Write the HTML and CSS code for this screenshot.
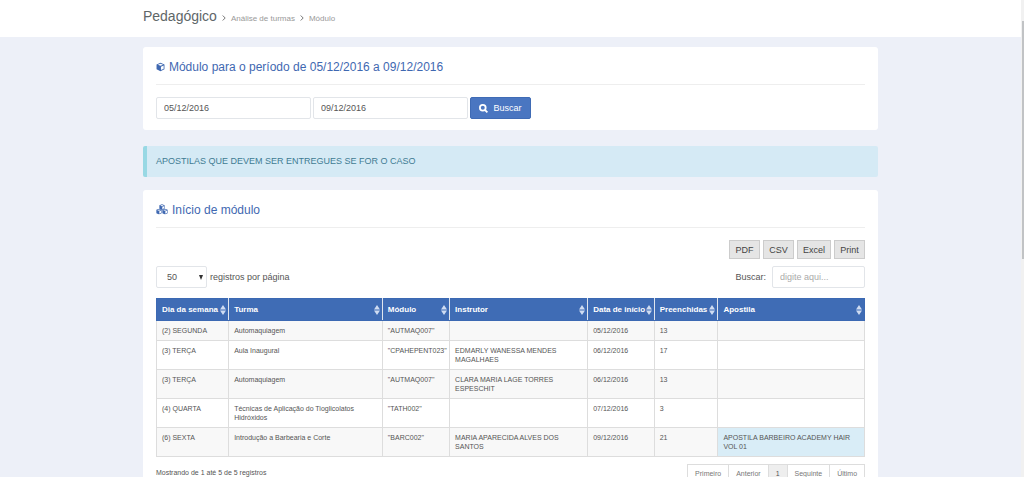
FILE: index.html
```html
<!DOCTYPE html>
<html lang="pt-BR">
<head>
<meta charset="utf-8">
<title>Pedagógico - Módulo</title>
<link rel="stylesheet" href="styles.css">
</head>
<body>
<svg class="defs" aria-hidden="true">
  <symbol id="cube" viewBox="0 0 20 20">
    <path fill="currentColor" fill-rule="evenodd" d="M10 0.8 18.8 4.2V15.2L10 19.6 1.2 15.2V4.2ZM10 2.8 4 5.1 10 7.4 16 5.1ZM11 9.2V16.9L17 13.9V6.9Z"/>
  </symbol>
  <symbol id="sort" viewBox="0 0 6 10">
    <path fill="currentColor" d="M3 0 6 4.4H0ZM0 5.6H6L3 10Z"/>
  </symbol>
</svg>
<div class="shell">
  <div class="page">
    <header class="topbar">
      <nav class="container crumbs">
        <h1>Pedagógico</h1>
        <svg class="chev" viewBox="0 0 4 6"><path d="M.7.5 3.2 3 .7 5.5"/></svg>
        <a href="#">Análise de turmas</a>
        <svg class="chev" viewBox="0 0 4 6"><path d="M.7.5 3.2 3 .7 5.5"/></svg>
        <a href="#">Módulo</a>
      </nav>
    </header>
    <main class="container">
      <section class="panel">
        <h2><svg class="cube"><use href="#cube"/></svg>Módulo para o período de 05/12/2016 a 09/12/2016</h2>
        <form class="period">
          <input class="field date" type="text" value="05/12/2016" aria-label="Data inicial">
          <input class="field date" type="text" value="09/12/2016" aria-label="Data final">
          <button class="search" type="button"><svg viewBox="0 0 10 10"><circle cx="4.2" cy="4.2" r="3.2"/><path d="M6.5 6.5 9.3 9.3"/></svg>Buscar</button>
        </form>
      </section>
      <div class="notice">APOSTILAS QUE DEVEM SER ENTREGUES SE FOR O CASO</div>
      <section class="panel">
        <h2><svg class="cubes" viewBox="0 0 40 36"><use href="#cube" x="10" y="0" width="20" height="20"/><use href="#cube" x="0" y="15" width="20" height="20"/><use href="#cube" x="20" y="15" width="20" height="20"/></svg>Início de módulo</h2>
        <div class="exports">
          <button type="button">PDF</button>
          <button type="button">CSV</button>
          <button type="button">Excel</button>
          <button type="button">Print</button>
        </div>
        <div class="tools">
          <label class="length"><span class="pick"><select class="field"><option>50</option></select><svg viewBox="0 0 4 5"><path d="M0 0H4L2 5Z"/></svg></span>registros por página</label>
          <label class="filter">Buscar:<input class="field" type="search" placeholder="digite aqui..."></label>
        </div>
        <table>
          <colgroup><col class="c-day"><col class="c-class"><col class="c-mod"><col class="c-inst"><col class="c-date"><col class="c-fill"><col></colgroup>
          <thead>
            <tr>
              <th><span>Dia da semana<svg><use href="#sort"/></svg></span></th>
              <th><span>Turma<svg><use href="#sort"/></svg></span></th>
              <th><span>Módulo<svg><use href="#sort"/></svg></span></th>
              <th><span>Instrutor<svg><use href="#sort"/></svg></span></th>
              <th><span>Data de início<svg><use href="#sort"/></svg></span></th>
              <th><span>Preenchidas<svg><use href="#sort"/></svg></span></th>
              <th><span>Apostila<svg><use href="#sort"/></svg></span></th>
            </tr>
          </thead>
          <tbody>
            <tr><td>(2) SEGUNDA</td><td>Automaquiagem</td><td>"AUTMAQ007"</td><td></td><td>05/12/2016</td><td>13</td><td></td></tr>
            <tr><td>(3) TERÇA</td><td>Aula Inaugural</td><td>"CPAHEPENT023"</td><td>EDMARLY WANESSA MENDES<br>MAGALHAES</td><td>06/12/2016</td><td>17</td><td></td></tr>
            <tr><td>(3) TERÇA</td><td>Automaquiagem</td><td>"AUTMAQ007"</td><td>CLARA MARIA LAGE TORRES<br>ESPESCHIT</td><td>06/12/2016</td><td>13</td><td></td></tr>
            <tr><td>(4) QUARTA</td><td>Técnicas de Aplicação do Tioglicolatos<br>Hidróxidos</td><td>"TATH002"</td><td></td><td>07/12/2016</td><td>3</td><td></td></tr>
            <tr><td>(6) SEXTA</td><td>Introdução a Barbearia e Corte</td><td>"BARC002"</td><td>MARIA APARECIDA ALVES DOS<br>SANTOS</td><td>09/12/2016</td><td>21</td><td class="info">APOSTILA BARBEIRO ACADEMY HAIR<br>VOL 01</td></tr>
          </tbody>
        </table>
        <div class="foot">
          <p>Mostrando de 1 até 5 de 5 registros</p>
          <nav class="pager"><a href="#">Primeiro</a><a href="#">Anterior</a><a class="on" href="#">1</a><a href="#">Seguinte</a><a href="#">Último</a></nav>
        </div>
      </section>
    </main>
  </div>
  <div class="track"><div class="thumb"></div></div>
</div>
</body>
</html>
```
FILE: styles.css
```css
* { box-sizing: border-box; }
body { margin: 0; font: 9px/12px "Liberation Sans", Arial, sans-serif; color: #555; background: #edf0f8; }
h1, h2, p { margin: 0; font-weight: normal; }
a { color: inherit; text-decoration: none; }
input, select, button { font: inherit; color: inherit; margin: 0; }
.defs { display: none; }
.shell { display: flex; height: 100vh; overflow: hidden; }
.page { flex: 1; min-width: 0; }
.container { width: 72%; min-width: 620px; margin: 0 auto; }
.topbar { background: #fff; padding: 8px 0 10px; }
.crumbs { display: flex; align-items: baseline; gap: 5px; height: 19px; line-height: 16px; font-size: 8px; color: #999; }
.crumbs h1 { font-size: 14px; color: #5e6668; }
.chev { width: 4px; height: 6px; fill: none; stroke: #777; }
.panel { background: #fff; border-radius: 3px; padding: 10px 13px 11px; margin-top: 10px; }
.panel h2 { display: flex; align-items: center; gap: 4px; height: 28px; padding-bottom: 8px; margin-bottom: 12px; border-bottom: 1px solid #eee; font-size: 12px; color: #3f68b1; }
.cube { width: 9px; height: 10px; }
.cubes { width: 12px; height: 11px; }
.field { height: 22px; border: 1px solid #e2e5e9; border-radius: 2px; background: #fff; padding: 0 7px; outline: 0; }
.period { display: flex; gap: 2px; }
.date { width: 155px; }
.search { display: flex; align-items: center; justify-content: center; gap: 5px; width: 61px; height: 22px; padding: 0; border: 1px solid #3f6bb5; border-radius: 2px; background: #4a76c1; color: #fff; }
.search svg { width: 9px; height: 9px; fill: none; stroke: #fff; stroke-width: 2; }
.notice { margin: 16px 0 13px; padding: 9px; border-left: 4px solid #98d8e4; border-radius: 2px; background: #d5eaf5; color: #3f7c93; line-height: 13px; }
.notice + .panel { margin-top: 0; }
.exports { display: flex; justify-content: flex-end; gap: 3px; }
.exports button { height: 19px; padding: 0 5px; border: 1px solid #ccc; background: #e5e5e5; color: #444; min-width: 31px; }
.tools { display: flex; justify-content: space-between; margin: 7px 0 10px; }
.length, .filter { display: flex; align-items: center; gap: 3px; }
.filter { gap: 6px; }
.filter input { width: 93px; }
.filter input::placeholder { color: #aaa; opacity: 1; }
.pick { display: grid; align-items: center; }
.pick select, .pick svg { grid-area: 1 / 1; }
.pick select { width: 51px; padding: 0 10px; appearance: none; }
.pick svg { width: 4px; height: 5px; justify-self: end; margin-right: 4px; fill: #333; pointer-events: none; }
table { width: 100%; table-layout: fixed; border-collapse: collapse; }
.c-day { width: 10.2%; }
.c-class { width: 21.7%; }
.c-mod { width: 9.5%; }
.c-inst { width: 19.5%; }
.c-date { width: 9.4%; }
.c-fill { width: 9%; }
th { height: 22px; padding: 0 2px 0 5px; border: 1px solid #dfe5ee; border-top-color: #3c69b3; border-bottom-color: #3c69b3; background: #3f6cb5; color: #fff; font-size: 8px; text-align: left; white-space: nowrap; }
th:first-child { border-left-color: #3c69b3; }
th:last-child { border-right-color: #3c69b3; }
th span { display: flex; align-items: center; justify-content: space-between; }
th svg { width: 6px; height: 10px; flex: none; color: #cfdcf2; }
td { padding: 5px; border: 1px solid #ddd; vertical-align: top; font-size: 7px; line-height: 9px; white-space: nowrap; }
tbody tr:nth-child(odd) { background: #f8f8f8; }
td.info { background: #d9edf7; }
.foot { display: flex; justify-content: space-between; margin-top: 7px; font-size: 7px; line-height: 17px; }
.pager { display: flex; border: 1px solid #ddd; color: #777; }
.pager a { padding: 0 7px; }
.pager a + a { border-left: 1px solid #ddd; }
.pager .on { background: #eee; color: #555; }
.track { width: 3px; padding-top: 21px; background: #f1f1f1; }
.thumb { height: 238px; margin-left: 1px; background: #c1c3c5; }
```
